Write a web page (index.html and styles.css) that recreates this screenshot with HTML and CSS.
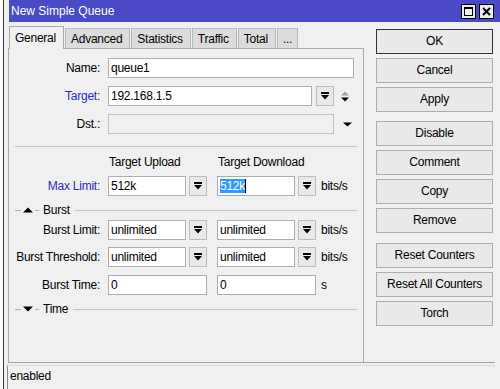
FILE: index.html
```html
<!DOCTYPE html>
<html lang="en">
<head>
<meta charset="UTF-8" />
<meta name="viewport" content="width=device-width, initial-scale=1" />
<title>New Simple Queue</title>
<link rel="stylesheet" href="styles.css">
</head>
<body>

<div class="desk"></div>

<div class="window">
  <div class="titlebar">
    <span class="title">New Simple Queue</span>
    <span class="tb-btn">
      <svg width="9" height="9" viewBox="0 0 9 9"><rect x="0.5" y="0.5" width="8" height="8" fill="none" stroke="#000"/><rect x="0" y="0" width="9" height="2"/></svg>
    </span>
    <span class="tb-btn">
      <svg width="9" height="9" viewBox="0 0 9 9"><path d="M1 1L8 8M8 1L1 8" stroke="#000" stroke-width="2"/></svg>
    </span>
  </div>

  <div class="main">
    <div class="tabs-area">
      <div class="tabbar">
        <div class="tab active">General</div>
        <div class="tab">Advanced</div>
        <div class="tab">Statistics</div>
        <div class="tab">Traffic</div>
        <div class="tab">Total</div>
        <div class="tab more">...</div>
      </div>

      <div class="panel">
        <div class="row first">
          <span class="lbl">Name:</span>
          <div class="field name">queue1</div>
        </div>
        <div class="row">
          <span class="lbl blue">Target:</span>
          <div class="field target">192.168.1.5</div>
          <span class="dd target-dd">
            <svg width="8" height="8" viewBox="0 0 8 8"><rect x="0" y="0" width="8" height="2"/><path d="M0 3H8L4 7.5Z"/></svg>
          </span>
          <span class="updown">
            <svg width="10" height="11" viewBox="0 0 10 11"><path d="M1 4.5L5 0.5L9 4.5Z" fill="#a0a0a0"/><path d="M1 6.5H9L5 10.5Z"/></svg>
          </span>
        </div>
        <div class="row">
          <span class="lbl">Dst.:</span>
          <div class="field dst disabled"></div>
          <span class="dst-arrow">
            <svg width="9" height="5" viewBox="0 0 9 5"><path d="M0 0.5H9L4.5 4.5Z"/></svg>
          </span>
        </div>

        <div class="sep"></div>

        <div class="cols">
          <span class="col">Target Upload</span>
          <span class="col">Target Download</span>
        </div>

        <div class="row maxlimit">
          <span class="lbl blue">Max Limit:</span>
          <div class="field short">512k</div>
          <span class="dd"><svg width="8" height="8" viewBox="0 0 8 8"><rect x="0" y="0" width="8" height="2"/><path d="M0 3H8L4 7.5Z"/></svg></span>
          <div class="field short second"><span class="sel">512k</span><span class="caret"></span></div>
          <span class="dd"><svg width="8" height="8" viewBox="0 0 8 8"><rect x="0" y="0" width="8" height="2"/><path d="M0 3H8L4 7.5Z"/></svg></span>
          <span class="unit">bits/s</span>
        </div>

        <div class="group">
          <span class="dash"></span>
          <svg class="tri" width="10" height="6" viewBox="0 0 10 6"><path d="M0 5.5L5 0.5L10 5.5Z"/></svg>
          <span class="dash short-dash"></span>
          <span class="group-name">Burst</span>
          <span class="line"></span>
        </div>

        <div class="row burst-first">
          <span class="lbl">Burst Limit:</span>
          <div class="field short">unlimited</div>
          <span class="dd"><svg width="8" height="8" viewBox="0 0 8 8"><rect x="0" y="0" width="8" height="2"/><path d="M0 3H8L4 7.5Z"/></svg></span>
          <div class="field short second">unlimited</div>
          <span class="dd"><svg width="8" height="8" viewBox="0 0 8 8"><rect x="0" y="0" width="8" height="2"/><path d="M0 3H8L4 7.5Z"/></svg></span>
          <span class="unit">bits/s</span>
        </div>
        <div class="row burst-next">
          <span class="lbl">Burst Threshold:</span>
          <div class="field short">unlimited</div>
          <span class="dd"><svg width="8" height="8" viewBox="0 0 8 8"><rect x="0" y="0" width="8" height="2"/><path d="M0 3H8L4 7.5Z"/></svg></span>
          <div class="field short second">unlimited</div>
          <span class="dd"><svg width="8" height="8" viewBox="0 0 8 8"><rect x="0" y="0" width="8" height="2"/><path d="M0 3H8L4 7.5Z"/></svg></span>
          <span class="unit">bits/s</span>
        </div>
        <div class="row burst-time">
          <span class="lbl">Burst Time:</span>
          <div class="field time">0</div>
          <div class="field time second">0</div>
          <span class="unit">s</span>
        </div>

        <div class="group">
          <span class="dash"></span>
          <svg class="tri" width="10" height="6" viewBox="0 0 10 6"><path d="M0 0.5H10L5 5.5Z"/></svg>
          <span class="dash short-dash"></span>
          <span class="group-name">Time</span>
          <span class="line"></span>
        </div>
      </div>
    </div>

    <div class="buttons">
      <div class="btn default">OK</div>
      <div class="btn">Cancel</div>
      <div class="btn">Apply</div>
      <div class="btn gap">Disable</div>
      <div class="btn">Comment</div>
      <div class="btn">Copy</div>
      <div class="btn">Remove</div>
      <div class="btn gap wide-gap">Reset Counters</div>
      <div class="btn">Reset All Counters</div>
      <div class="btn">Torch</div>
    </div>
  </div>

  <div class="status">
    <div class="status-box">enabled</div>
  </div>
</div>

</body>
</html>
```

FILE: styles.css
```css
body {
  margin: 0;
  height: 389px;
  overflow: hidden;
  display: flex;
  font-family: "Liberation Sans", Arial, sans-serif;
  font-size: 12px;
  letter-spacing: -0.25px;
  color: #000;
  background: #f0f0f0;
}
.desk {
  width: 3px;
  background: #fafafa;
  border-right: 1px solid #3c3c3c;
}
.window {
  flex: 1;
  display: flex;
  flex-direction: column;
  background: #f0f0f0;
}

/* title bar */
.titlebar {
  height: 22px;
  margin-left: 5px;
  padding: 0 6px 0 2px;
  display: flex;
  align-items: center;
  gap: 3px;
  background: #4a4ac8;
  color: #fff;
}
.title {
  flex: 1;
  letter-spacing: 0;
}
.tb-btn {
  width: 15px;
  height: 15px;
  box-sizing: border-box;
  border: 1px solid #000;
  background: #ececec;
  display: flex;
  align-items: center;
  justify-content: center;
}

/* main area */
.main {
  height: 340px;
  box-sizing: border-box;
  padding: 4px 7px 0 4px;
  display: flex;
  gap: 12px;
}
.tabs-area {
  width: 356px;
  display: flex;
  flex-direction: column;
}
.tabbar {
  height: 22px;
  display: flex;
  align-items: flex-end;
  gap: 1px;
  padding-left: 1px;
}
.tab {
  height: 20px;
  box-sizing: border-box;
  padding: 0 7px 0 5px;
  line-height: 21px;
  background: #dcdcdc;
  border: 1px solid #b9b9b9;
  border-bottom: none;
  white-space: nowrap;
}
.tab.active {
  height: 23px;
  margin-bottom: -1px;
  line-height: 23px;
  background: #f0f0f0;
  border-color: #a9a9a9;
  position: relative;
  z-index: 1;
}
.tab.more {
  padding: 0 5px;
}
.panel {
  height: 314px;
  box-sizing: border-box;
  border: 1px solid #a9a9a9;
  border-bottom: none;
  padding-top: 9px;
}

/* form rows */
.row {
  height: 20px;
  margin-top: 8px;
  display: flex;
  align-items: center;
}
.row.first {
  margin-top: 0;
}
.row.maxlimit {
  margin-top: 6px;
}
.row.burst-first {
  margin-top: 4px;
}
.row.burst-next {
  margin-top: 7px;
}
.lbl {
  width: 91px;
  margin-right: 8px;
  text-align: right;
  white-space: nowrap;
}
.lbl.blue {
  color: #2a2ab8;
}
.field {
  height: 20px;
  box-sizing: border-box;
  border: 1px solid #abadb3;
  background: #fff;
  padding-left: 2px;
  line-height: 18px;
  white-space: nowrap;
  overflow: hidden;
}
.field.name {
  width: 246px;
}
.field.target {
  width: 204px;
}
.field.dst {
  width: 226px;
}
.field.disabled {
  background: #f0f0f0;
  border-color: #c2c2c2;
}
.field.short {
  width: 78px;
}
.field.time {
  width: 99px;
}
.field.second {
  margin-left: 10px;
}
.sel {
  background: #3399ff;
  color: #fff;
}
.caret {
  display: inline-block;
  width: 1px;
  height: 14px;
  background: #000;
  vertical-align: -3px;
}
.dd {
  width: 18px;
  height: 20px;
  box-sizing: border-box;
  margin-left: 3px;
  border: 1px solid #bdbdbd;
  background: #e9e9e9;
  display: flex;
  align-items: center;
  justify-content: center;
}
.dd.target-dd {
  margin-left: 4px;
}
.updown {
  margin-left: 6px;
  display: flex;
}
.dst-arrow {
  margin-left: 9px;
  display: flex;
}
.unit {
  margin-left: 5px;
}

.sep {
  height: 1px;
  margin: 12px 6px 0 6px;
  background: #c4c4c4;
}
.cols {
  height: 16px;
  margin-top: 7px;
  padding-left: 100px;
  display: flex;
  align-items: center;
}
.col {
  width: 109px;
}

/* collapsible group headers */
.group {
  height: 12px;
  margin: 8px 6px 0 6px;
  display: flex;
  align-items: center;
}
.dash {
  width: 6px;
  height: 1px;
  background: #b0b0b0;
}
.dash.short-dash {
  width: 4px;
}
.tri {
  margin: 0 2px;
}
.group-name {
  margin-left: 4px;
}
.line {
  flex: 1;
  height: 1px;
  margin-left: 5px;
  background: #c4c4c4;
}

/* button column */
.buttons {
  width: 117px;
  padding-top: 3px;
  display: flex;
  flex-direction: column;
  gap: 4px;
}
.btn {
  height: 25px;
  box-sizing: border-box;
  border: 1px solid #adadad;
  background: #e9e9e9;
  text-align: center;
  line-height: 23px;
  white-space: nowrap;
}
.btn.default {
  border-color: #333;
}
.btn.gap {
  margin-top: 5px;
}
.btn.wide-gap {
  margin-top: 6px;
}

/* status bar */
.status {
  height: 27px;
  box-sizing: border-box;
  margin: 0 5px 0 4px;
  padding-top: 2px;
  border-top: 1px solid #a0a0a0;
}
.status-box {
  height: 100%;
  box-sizing: border-box;
  margin-left: -1px;
  padding-left: 2px;
  border-left: 1px solid #8c8c8c;
  border-top: 1px solid #dadada;
  line-height: 21px;
}
```
